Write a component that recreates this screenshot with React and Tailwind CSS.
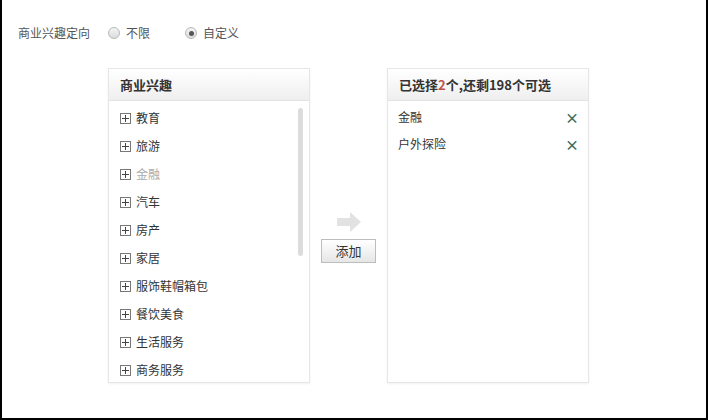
import React, { useState } from "react";

const INTERESTS = [
  "教育",
  "旅游",
  "金融",
  "汽车",
  "房产",
  "家居",
  "服饰鞋帽箱包",
  "餐饮美食",
  "生活服务",
  "商务服务",
];

const FONT = { fontFamily: '"Noto Sans CJK SC", "Liberation Sans", sans-serif' };

function Radio({ checked }) {
  return (
    <span className="flex h-[12px] w-[12px] items-center justify-center rounded-full border border-[#b9b9b9] bg-gradient-to-b from-[#f4f4f4] to-[#dcdcdc]">
      {checked && <span className="h-[5px] w-[5px] rounded-full bg-[#555]" />}
    </span>
  );
}

function PlusBox() {
  return (
    <span className="relative flex h-[11px] w-[11px] items-center justify-center border border-[#777] bg-white">
      <span className="absolute h-px w-[7px] bg-[#444]" />
      <span className="absolute h-[7px] w-px bg-[#444]" />
    </span>
  );
}

function PanelHeader({ children }) {
  return (
    <div className="flex h-[32px] items-center border-b border-[#e3e3e3] bg-gradient-to-b from-white to-[#efefef] px-[11px] text-[13px] font-bold text-[#333]">
      {children}
    </div>
  );
}

export default function App() {
  const [modo, setModo] = useState("custom");
  const [elegidos, setElegidos] = useState(["金融", "户外探险"]);

  return (
    <div
      className="h-[420px] w-[708px] border-b-2 border-l-2 border-r-2 border-black bg-white pt-[21px] text-[12px] text-[#333]"
      style={FONT}
    >
      {/* fila de opciones */}
      <div className="flex h-[24px] items-center pl-[16px]">
        <span className="w-[90px] text-[#555]">商业兴趣定向</span>
        <label className="flex w-[77px] cursor-pointer items-center gap-[6px] text-[#555]" onClick={() => setModo("all")}>
          <Radio checked={modo === "all"} />
          不限
        </label>
        <label className="flex cursor-pointer items-center gap-[6px] text-[#555]" onClick={() => setModo("custom")}>
          <Radio checked={modo === "custom"} />
          自定义
        </label>
      </div>

      <div className="ml-[106px] mt-[23px] flex">
        {/* panel izquierdo */}
        <div className="h-[315px] w-[202px] border border-[#e6e6e6] shadow-[0_1px_2px_rgba(0,0,0,0.06)]">
          <PanelHeader>商业兴趣</PanelHeader>
          <div className="flex">
            <ul className="flex-1 pt-[3px]">
              {INTERESTS.map((item) => (
                <li key={item} className="flex h-[28px] items-center gap-[5px] pl-[11px]">
                  <PlusBox />
                  <span className={elegidos.includes(item) ? "text-[#aaa]" : "text-[#333]"}>{item}</span>
                </li>
              ))}
            </ul>
            <div className="mr-[6px] mt-[7px] h-[148px] w-[5px] rounded-full bg-[#dcdcdc]" />
          </div>
        </div>

        {/* columna central */}
        <div className="flex w-[77px] flex-col items-center pt-[143px]">
          <svg width="26" height="22" viewBox="0 0 26 22">
            <path d="M1 7h13V1l11 10-11 10v-6H1z" fill="#e2e2e2" />
          </svg>
          <button className="mt-[6px] h-[24px] w-[55px] border border-[#bdbdbd] bg-gradient-to-b from-white to-[#e6e6e6] text-[13px] text-[#333]">
            添加
          </button>
        </div>

        {/* panel derecho */}
        <div className="h-[315px] w-[202px] border border-[#e6e6e6] shadow-[0_1px_2px_rgba(0,0,0,0.06)]">
          <PanelHeader>
            已选择<span className="text-[#c0504d]">{elegidos.length}</span>个,还剩{200 - elegidos.length}个可选
          </PanelHeader>
          <ul className="pt-[2px]">
            {elegidos.map((item) => (
              <li key={item} className="flex h-[27px] items-center justify-between pl-[10px] pr-[9px]">
                <span>{item}</span>
                <button
                  className="text-[14px] font-bold leading-none text-[#3c6e5e]"
                  onClick={() => setElegidos((prev) => prev.filter((x) => x !== item))}
                >
                  ×
                </button>
              </li>
            ))}
          </ul>
        </div>
      </div>
    </div>
  );
}
